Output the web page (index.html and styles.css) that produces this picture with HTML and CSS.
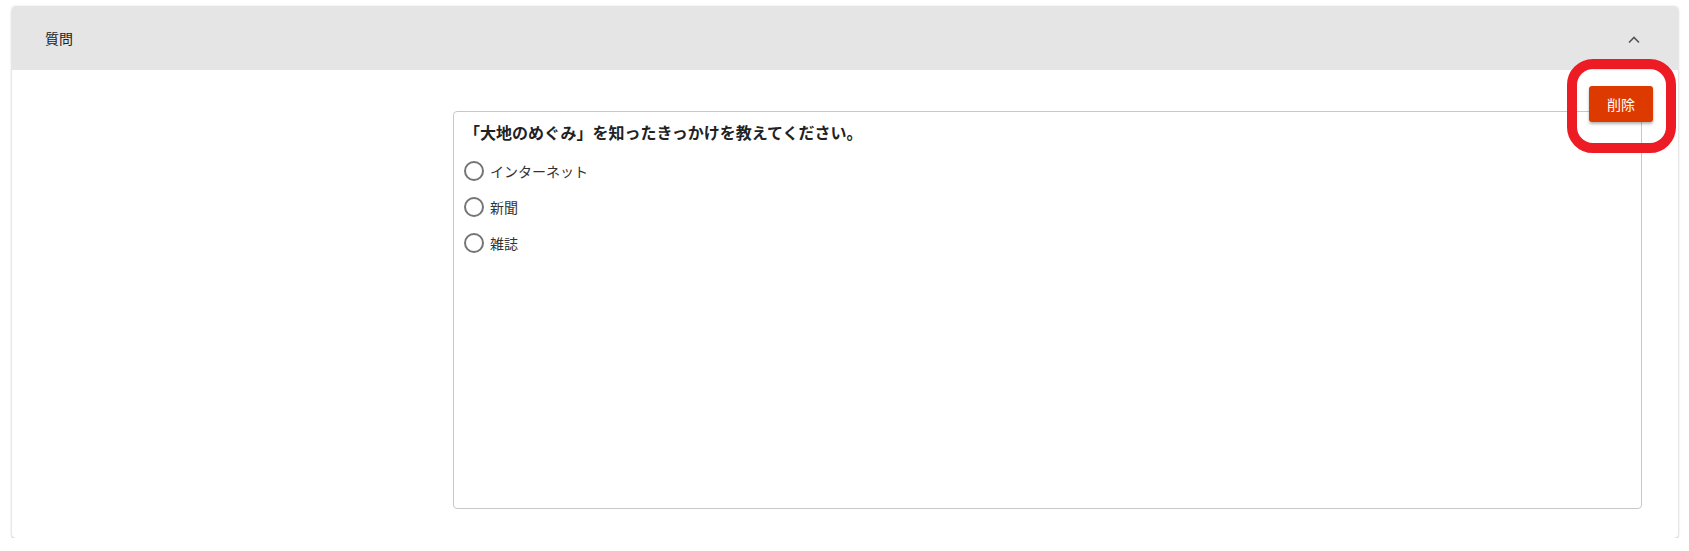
FILE: index.html
```html
<!DOCTYPE html>
<html lang="ja">
<head>
<meta charset="utf-8">
<link rel="stylesheet" href="styles.css">
</head>
<body>
<section class="card">
  <header class="card-header">
    <span class="card-title">質問</span>
    <svg class="chevron" width="14" height="10" viewBox="0 0 14 10"><path d="M2 7.5 L7 2.5 L12 7.5" fill="none" stroke="#555" stroke-width="1.6"/></svg>
  </header>
  <div class="card-body">
    <div class="question-box">
      <div class="question">「大地のめぐみ」を知ったきっかけを教えてください。</div>
      <label class="option"><span class="radio"></span><span class="opt-label">インターネット</span></label>
      <label class="option"><span class="radio"></span><span class="opt-label">新聞</span></label>
      <label class="option"><span class="radio"></span><span class="opt-label">雑誌</span></label>
    </div>
    <button class="delete-btn">削除</button>
    <div class="highlight"></div>
  </div>
</section>
</body>
</html>
```
FILE: styles.css
```css
html, body {
  margin: 0;
  padding: 0;
  background: #fff;
  font-family: "Noto Sans CJK JP", "Noto Sans", sans-serif;
  color: #222;
}
.card {
  margin: 6px 11px 0 12px;
  height: 532px;
  background: #fff;
  border-radius: 4px;
  box-shadow: 0 1px 3px rgba(0,0,0,0.25), 0 1px 1px rgba(0,0,0,0.08);
  display: flex;
  flex-direction: column;
}
.card-header {
  height: 64px;
  flex: none;
  background: #e5e5e5;
  border-radius: 4px 4px 0 0;
  display: flex;
  align-items: center;
  justify-content: space-between;
  padding: 0 37px 0 33px;
}
.card-title {
  font-size: 14px;
  color: #222;
}
.chevron { display: block; margin-top: 4px; }
.card-body {
  position: relative;
  flex: 1;
  display: flex;
  padding: 41px 36px 29px 441px;
}
.question-box {
  flex: 1;
  border: 1px solid #c8c8c8;
  border-radius: 4px;
  padding: 8px 10px;
  display: flex;
  flex-direction: column;
}
.question {
  font-size: 16px;
  font-weight: bold;
  line-height: 24px;
  color: #222;
  margin-bottom: 9px;
}
.option {
  display: flex;
  align-items: center;
  height: 36px;
  gap: 6px;
}
.radio {
  width: 16px;
  height: 16px;
  border: 2px solid #757575;
  border-radius: 50%;
  flex: none;
}
.opt-label {
  font-size: 14px;
  color: #333;
}
.delete-btn {
  position: absolute;
  top: 16px;
  right: 25px;
  width: 64px;
  height: 36px;
  border: none;
  border-radius: 3px;
  background: #dd3a00;
  color: #fff;
  font-family: inherit;
  font-size: 14px;
  box-shadow: 0 2px 3px rgba(0,0,0,0.3);
}
.highlight {
  position: absolute;
  top: -11px;
  right: 2px;
  width: 89px;
  height: 74px;
  border: 10px solid #ed1c24;
  border-radius: 26px;
  pointer-events: none;
}
```
